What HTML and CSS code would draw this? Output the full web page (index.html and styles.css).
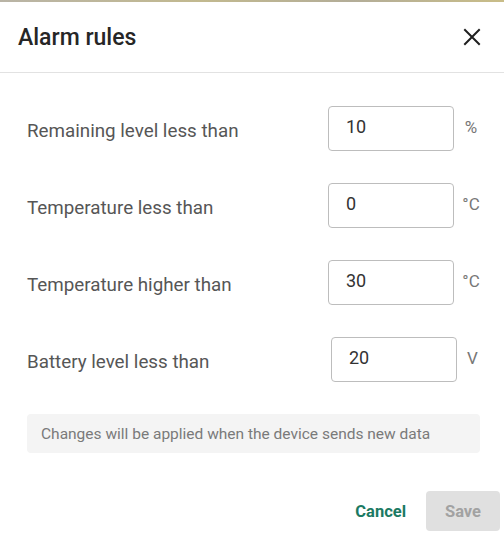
FILE: index.html
```html
<!DOCTYPE html>
<html lang="en">
<head>
<meta charset="utf-8">
<title>Alarm rules</title>
<link rel="stylesheet" href="styles.css">
</head>
<body>
<div class="backdrop-edge"></div>
<div class="dialog">
  <header class="dialog-header">
    <h1 class="dialog-title">Alarm rules</h1>
    <button class="close-btn" aria-label="Close">
      <svg width="18" height="18" viewBox="0 0 18 18"><path d="M2 2 L16 16 M16 2 L2 16" stroke="#1f1f1f" stroke-width="2" stroke-linecap="square" fill="none"/></svg>
    </button>
  </header>
  <div class="dialog-body">
    <div class="rule-row">
      <label class="rule-label">Remaining level less than</label>
      <input class="rule-input" type="text" value="10">
      <span class="rule-unit">%</span>
    </div>
    <div class="rule-row">
      <label class="rule-label">Temperature less than</label>
      <input class="rule-input" type="text" value="0">
      <span class="rule-unit">°C</span>
    </div>
    <div class="rule-row">
      <label class="rule-label">Temperature higher than</label>
      <input class="rule-input" type="text" value="30">
      <span class="rule-unit">°C</span>
    </div>
    <div class="rule-row rule-row--shift">
      <label class="rule-label">Battery level less than</label>
      <input class="rule-input" type="text" value="20">
      <span class="rule-unit">V</span>
    </div>
    <div class="note">Changes will be applied when the device sends new data</div>
  </div>
  <footer class="dialog-actions">
    <button class="btn-text">Cancel</button>
    <button class="btn-save" disabled>Save</button>
  </footer>
</div>
</body>
</html>
```

FILE: styles.css
```css
* { box-sizing: border-box; }

html, body {
  margin: 0;
  padding: 0;
  background: #ffffff;
  font-family: Roboto, "Liberation Sans", sans-serif;
}

.backdrop-edge {
  height: 2px;
  background: linear-gradient(90deg, #b9b4a6, #c2b98f 40%, #b3ad98 70%, #c9bd88);
}

.dialog {
  background: #ffffff;
}

.dialog-header {
  height: 71px;
  display: flex;
  align-items: center;
  justify-content: space-between;
  padding: 0 23px 0 18px;
  border-bottom: 1px solid #e2e2e2;
}

.dialog-title {
  margin: 0;
  font-size: 23px;
  font-weight: 500;
  color: #262626;
}

.close-btn {
  border: 0;
  background: none;
  padding: 0;
  width: 18px;
  height: 18px;
  display: flex;
}

.dialog-body {
  padding: 33px 16px 0 27px;
}

.rule-row {
  display: grid;
  grid-template-columns: 1fr 126px 34px;
  align-items: center;
  margin-bottom: 32px;
}

.rule-row--shift {
  grid-template-columns: 1fr 126px 31px;
}

.rule-label {
  font-size: 18.8px;
  color: #565656;
  padding-top: 4px;
}

.rule-input {
  width: 126px;
  height: 45px;
  border: 1px solid #bdbdbd;
  border-radius: 4px;
  padding: 0 0 4px 17px;
  font-family: Roboto, "Liberation Sans", sans-serif;
  font-size: 18px;
  color: #333333;
  outline: none;
}

.rule-unit {
  text-align: center;
  font-size: 17px;
  color: #777777;
  padding-bottom: 4px;
}

.note {
  height: 39px;
  margin-right: 8px;
  background: #f4f4f4;
  border-radius: 4px;
  display: flex;
  align-items: center;
  padding-left: 14px;
  font-size: 15.5px;
  color: #7a7a7a;
}

.dialog-actions {
  display: flex;
  justify-content: flex-end;
  align-items: center;
  gap: 20px;
  padding: 38px 4px 0 0;
}

.btn-text {
  border: 0;
  background: none;
  padding: 0;
  font-family: Roboto, "Liberation Sans", sans-serif;
  font-size: 16.5px;
  font-weight: 700;
  color: #1b7a63;
}

.btn-save {
  width: 74px;
  height: 40px;
  border: 0;
  border-radius: 4px;
  background: #e0e0e0;
  font-family: Roboto, "Liberation Sans", sans-serif;
  font-size: 16.5px;
  font-weight: 700;
  color: #a2a2a2;
}
```
